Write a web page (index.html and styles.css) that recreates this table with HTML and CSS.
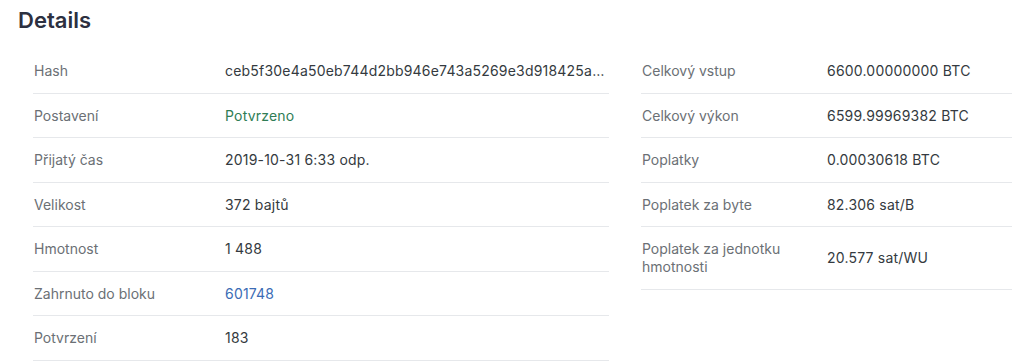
FILE: index.html
```html
<!DOCTYPE html>
<html lang="cs">
<head>
  <meta charset="UTF-8" />
  <title>Details</title>
  <link rel="stylesheet" href="styles.css">
</head>
<body>

  <h1 class="title">Details</h1>

  <div class="details">
    <!-- levý sloupec -->
    <table class="info-table left">
      <tr>
        <td class="label">Hash</td>
        <td class="value"><div class="hash">ceb5f30e4a50eb744d2bb946e743a5269e3d918425a73c9b24ef7e11f9d1c0ab</div></td>
      </tr>
      <tr>
        <td class="label">Postavení</td>
        <td class="value status">Potvrzeno</td>
      </tr>
      <tr>
        <td class="label">Přijatý čas</td>
        <td class="value">2019-10-31 6:33 odp.</td>
      </tr>
      <tr>
        <td class="label">Velikost</td>
        <td class="value">372 bajtů</td>
      </tr>
      <tr>
        <td class="label">Hmotnost</td>
        <td class="value">1 488</td>
      </tr>
      <tr>
        <td class="label">Zahrnuto do bloku</td>
        <td class="value"><a class="link" href="#">601748</a></td>
      </tr>
      <tr>
        <td class="label">Potvrzení</td>
        <td class="value">183</td>
      </tr>
    </table>

    <!-- pravý sloupec -->
    <table class="info-table right">
      <tr>
        <td class="label">Celkový vstup</td>
        <td class="value">6600.00000000 BTC</td>
      </tr>
      <tr>
        <td class="label">Celkový výkon</td>
        <td class="value">6599.99969382 BTC</td>
      </tr>
      <tr>
        <td class="label">Poplatky</td>
        <td class="value">0.00030618 BTC</td>
      </tr>
      <tr>
        <td class="label">Poplatek za byte</td>
        <td class="value">82.306 sat/B</td>
      </tr>
      <tr>
        <td class="label">Poplatek za jednotku hmotnosti</td>
        <td class="value">20.577 sat/WU</td>
      </tr>
    </table>
  </div>

</body>
</html>
```

FILE: styles.css
```css
/* ======= základ ======= */
* {
  box-sizing: border-box;
  margin: 0;
  padding: 0;
}
body {
  font-family: Inter, "Noto Sans", Arial, sans-serif;
  background: #fff;
  color: #343a40;
  font-size: 14px;
  overflow: hidden;
}
.title {
  font-size: 22px;
  font-weight: 600;
  color: #2c3040;
  line-height: 28px;
  padding: 6px 18px 0;
}
.details {
  display: flex;
  gap: 32px;
  padding: 15px 0 0 33px;
}
.info-table {
  border-collapse: collapse;
  table-layout: fixed;
}
.info-table.left {
  width: 576px;
}
.info-table.right {
  flex: 1;
  align-self: flex-start;
}
.info-table td {
  border-bottom: 1px solid #e6e8eb;
  padding: 13px 0 12.5px 1px;
  line-height: 18px;
  vertical-align: middle;
}
.left .label {
  width: 191px;
}
.right .label {
  width: 185px;
  padding-right: 16px;
}
.label {
  color: #6b7075;
}
.value {
  color: #343a40;
  letter-spacing: 0.2px;
}
.hash {
  white-space: nowrap;
  overflow: hidden;
  text-overflow: ellipsis;
}
.status {
  color: #2f7d55;
}
.link {
  color: #3b6cb5;
  text-decoration: none;
}
```
